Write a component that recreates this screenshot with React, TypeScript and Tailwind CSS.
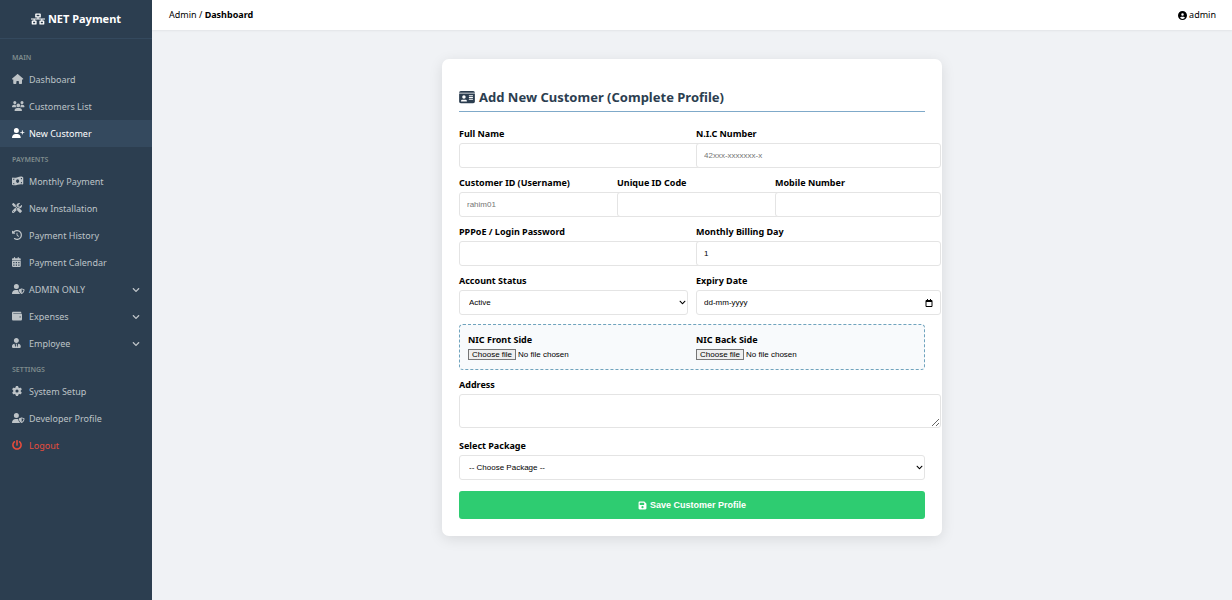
import type { ReactNode } from 'react'
import type { IconType } from 'react-icons'
import { FaChevronDown, FaNetworkWired, FaPowerOff, FaUserTie } from 'react-icons/fa'
import {
  FaCalendarDays,
  FaCircleUser,
  FaClockRotateLeft,
  FaFloppyDisk,
  FaGear,
  FaHouse,
  FaIdCard,
  FaMoneyBillWave,
  FaScrewdriverWrench,
  FaUserPlus,
  FaUsers,
  FaUserShield,
  FaWallet,
} from 'react-icons/fa6'

type NavItem = {
  label: string
  icon: IconType
  active?: boolean
  danger?: boolean
  expandable?: boolean
}

const NAV_SECTIONS: { title: string; items: NavItem[] }[] = [
  {
    title: 'MAIN',
    items: [
      { label: 'Dashboard', icon: FaHouse },
      { label: 'Customers List', icon: FaUsers },
      { label: 'New Customer', icon: FaUserPlus, active: true },
    ],
  },
  {
    title: 'PAYMENTS',
    items: [
      { label: 'Monthly Payment', icon: FaMoneyBillWave },
      { label: 'New Installation', icon: FaScrewdriverWrench },
      { label: 'Payment History', icon: FaClockRotateLeft },
      { label: 'Payment Calendar', icon: FaCalendarDays },
      { label: 'ADMIN ONLY', icon: FaUserShield, expandable: true },
      { label: 'Expenses', icon: FaWallet, expandable: true },
      { label: 'Employee', icon: FaUserTie, expandable: true },
    ],
  },
  {
    title: 'SETTINGS',
    items: [
      { label: 'System Setup', icon: FaGear },
      { label: 'Developer Profile', icon: FaUserShield },
      { label: 'Logout', icon: FaPowerOff, danger: true },
    ],
  },
]

// Inputs keep content-box sizing, so their padding spills past the column.
const CONTROL = "rounded-[3px] border border-[#e4e4e4] bg-white font-['Liberation_Sans',Arial,sans-serif] text-[8px] text-black"
const INPUT = `${CONTROL} box-content block h-[23px] w-full px-[7px] placeholder:text-[#757575]`

function NavLink({ item }: { item: NavItem }) {
  const Icon = item.icon
  const tone = item.danger
    ? 'text-[#e74c3c]'
    : item.active
      ? 'bg-[#34495e] text-white'
      : 'text-[#bdc3c7] hover:bg-[#34495e] hover:text-white'
  const content = (
    <>
      <span className="w-[17px] shrink-0 pb-px">
        <Icon className="h-[10px] w-[13px]" preserveAspectRatio="xMinYMid meet" />
      </span>
      <span>{item.label}</span>
      {item.expandable && <FaChevronDown className="ml-auto size-2" />}
    </>
  )

  if (item.expandable) {
    return (
      <button type="button" aria-expanded="false" className={`flex h-[27px] w-full items-center px-3 text-left ${tone}`}>
        {content}
      </button>
    )
  }

  return (
    <a href="#" aria-current={item.active ? 'page' : undefined} className={`flex h-[27px] items-center px-3 ${tone}`}>
      {content}
    </a>
  )
}

function Field({ id, label, children }: { id: string; label: string; children: ReactNode }) {
  return (
    <div className="min-w-0">
      <label htmlFor={id} className="mb-[3px] block text-[9px] leading-3 font-bold">
        {label}
      </label>
      {children}
    </div>
  )
}

function Select({ id, options }: { id: string; options: string[] }) {
  return (
    <div className="relative">
      <select id={id} className={`${CONTROL} block h-[25px] w-full appearance-none px-[9px]`}>
        {options.map((option) => (
          <option key={option}>{option}</option>
        ))}
      </select>
      <FaChevronDown className="pointer-events-none absolute inset-y-0 right-0.5 my-auto size-[7px]" />
    </div>
  )
}

function FileField({ id, label }: { id: string; label: string }) {
  return (
    <Field id={id} label={label}>
      <label
        htmlFor={id}
        className="flex h-3 cursor-pointer items-start gap-0.5 font-['Liberation_Sans',Arial,sans-serif] text-[8px] leading-[9px]"
      >
        <span className="border border-[#767676] bg-[#efefef] px-[3px]">Choose file</span>
        <span className="pt-px">No file chosen</span>
      </label>
      <input id={id} type="file" className="sr-only" />
    </Field>
  )
}

export default function App() {
  return (
    <div className="flex min-h-screen bg-[#f0f2f5] font-['Noto_Sans','Open_Sans',sans-serif] text-[9px] leading-3 text-black">
      <aside className="w-[152px] shrink-0 bg-[#2c3e50]">
        <div className="flex h-[39px] items-center justify-center gap-[3px] border-b border-[#34495e] text-[11px] font-bold text-white">
          <FaNetworkWired className="h-3 w-[14px]" />
          NET Payment
        </div>
        <nav aria-label="Main menu" className="pt-1.5">
          {NAV_SECTIONS.map((section) => (
            <div key={section.title}>
              <h2 className="px-3 pt-[7px] pb-0.5 text-[7px] font-semibold text-[#7f8c8d]">{section.title}</h2>
              {section.items.map((item) => (
                <NavLink key={item.label} item={item} />
              ))}
            </div>
          ))}
        </nav>
      </aside>

      <div className="min-w-0 flex-1">
        <header className="flex h-[30px] items-center justify-between bg-white pr-4 pl-[17px] shadow-[0_1px_2px_rgba(0,0,0,0.06)]">
          <div>
            Admin / <b>Dashboard</b>
          </div>
          <div className="flex items-center gap-0.5">
            <FaCircleUser className="size-[9px]" />
            admin
          </div>
        </header>

        <main className="px-4 pt-[29px] pb-8">
          <form className="mx-auto max-w-[500px] rounded-[7px] bg-white p-[17px] shadow-[0_3px_14px_rgba(0,0,0,0.1)]">
            <h1 className="mt-3 mb-4 flex items-center gap-1 border-b border-[#7fa9c9] pb-[5px] text-[13px] leading-[18px] font-bold text-[#2c3e50]">
              <FaIdCard className="h-[14px] w-4" />
              Add New Customer (Complete Profile)
            </h1>

            <div className="space-y-[9px]">
              <div className="grid grid-cols-2 gap-2">
                <Field id="full-name" label="Full Name">
                  <input id="full-name" type="text" className={INPUT} />
                </Field>
                <Field id="nic-number" label="N.I.C Number">
                  <input id="nic-number" type="text" placeholder="42xxx-xxxxxxx-x" className={INPUT} />
                </Field>
              </div>

              <div className="grid grid-cols-3 gap-2">
                <Field id="username" label="Customer ID (Username)">
                  <input id="username" type="text" placeholder="rahim01" className={INPUT} />
                </Field>
                <Field id="unique-id" label="Unique ID Code">
                  <input id="unique-id" type="text" className={INPUT} />
                </Field>
                <Field id="mobile" label="Mobile Number">
                  <input id="mobile" type="text" className={INPUT} />
                </Field>
              </div>

              <div className="grid grid-cols-2 gap-2">
                <Field id="password" label="PPPoE / Login Password">
                  <input id="password" type="text" className={INPUT} />
                </Field>
                <Field id="billing-day" label="Monthly Billing Day">
                  <input id="billing-day" type="text" inputMode="numeric" defaultValue="1" className={INPUT} />
                </Field>
              </div>

              <div className="grid grid-cols-2 gap-2">
                <Field id="status" label="Account Status">
                  <Select id="status" options={['Active', 'Inactive']} />
                </Field>
                <Field id="expiry" label="Expiry Date">
                  <div className={`${INPUT} flex items-center justify-between`}>
                    <input id="expiry" type="text" placeholder="dd-mm-yyyy" className="min-w-0 flex-1 placeholder:text-black" />
                    <button type="button" aria-label="Open calendar">
                      <svg viewBox="0 0 8 8" className="size-2" fill="none" stroke="currentColor">
                        <path d="M1 1.5h6v6H1z" />
                        <path d="M1 2h6" strokeWidth="2" />
                        <path d="M2.5 0v1M5.5 0v1" />
                      </svg>
                    </button>
                  </div>
                </Field>
              </div>

              <div className="grid grid-cols-2 gap-2 rounded-[4px] border border-dashed border-[#6fa3bd] bg-[#f8fafc] px-2 pt-[9px] pb-2">
                <FileField id="nic-front" label="NIC Front Side" />
                <FileField id="nic-back" label="NIC Back Side" />
              </div>

              <Field id="address" label="Address">
                <textarea id="address" className={`${CONTROL} box-content block h-[18px] w-full resize px-[7px] py-[7px]`} />
              </Field>
            </div>

            <div className="mt-3">
              <Field id="package" label="Select Package">
                <Select id="package" options={['-- Choose Package --']} />
              </Field>
            </div>

            <button
              type="submit"
              className="mt-[11px] flex h-7 w-full items-center justify-center gap-[3px] rounded-[3px] bg-[#2ecc71] font-['Liberation_Sans',Arial,sans-serif] text-[9px] font-bold text-white"
            >
              <FaFloppyDisk className="size-[9px]" />
              Save Customer Profile
            </button>
          </form>
        </main>
      </div>
    </div>
  )
}
